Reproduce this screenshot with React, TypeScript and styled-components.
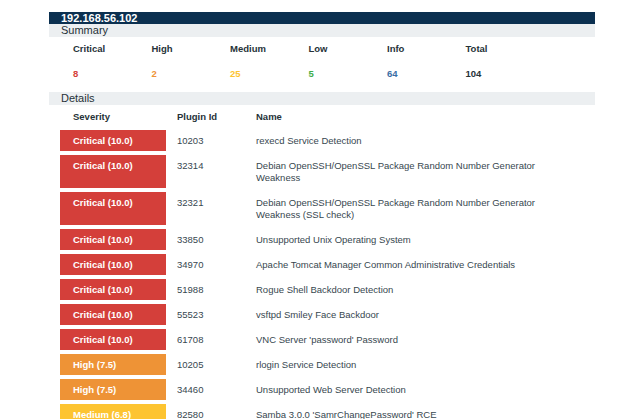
import React from "react";
import styled, { createGlobalStyle } from "styled-components";

const GlobalStyle = createGlobalStyle`
  body { margin: 0; background: #fff; font-family: "Liberation Sans", Arial, sans-serif; }
`;

type Sev = "critical" | "high" | "medium" | "low" | "info" | "total";
const colors: Record<Sev, string> = {
  critical: "#d43f3a",
  high: "#ee9336",
  medium: "#fdc431",
  low: "#3fae49",
  info: "#3a6ea5",
  total: "#263238",
};

const summary: { label: string; value: number; sev: Sev }[] = [
  { label: "Critical", value: 8, sev: "critical" },
  { label: "High", value: 2, sev: "high" },
  { label: "Medium", value: 25, sev: "medium" },
  { label: "Low", value: 5, sev: "low" },
  { label: "Info", value: 64, sev: "info" },
  { label: "Total", value: 104, sev: "total" },
];

const rows: { sev: Sev; label: string; id: string; name: string }[] = [
  { sev: "critical", label: "Critical (10.0)", id: "10203", name: "rexecd Service Detection" },
  { sev: "critical", label: "Critical (10.0)", id: "32314", name: "Debian OpenSSH/OpenSSL Package Random Number Generator Weakness" },
  { sev: "critical", label: "Critical (10.0)", id: "32321", name: "Debian OpenSSH/OpenSSL Package Random Number Generator Weakness (SSL check)" },
  { sev: "critical", label: "Critical (10.0)", id: "33850", name: "Unsupported Unix Operating System" },
  { sev: "critical", label: "Critical (10.0)", id: "34970", name: "Apache Tomcat Manager Common Administrative Credentials" },
  { sev: "critical", label: "Critical (10.0)", id: "51988", name: "Rogue Shell Backdoor Detection" },
  { sev: "critical", label: "Critical (10.0)", id: "55523", name: "vsftpd Smiley Face Backdoor" },
  { sev: "critical", label: "Critical (10.0)", id: "61708", name: "VNC Server 'password' Password" },
  { sev: "high", label: "High (7.5)", id: "10205", name: "rlogin Service Detection" },
  { sev: "high", label: "High (7.5)", id: "34460", name: "Unsupported Web Server Detection" },
  { sev: "medium", label: "Medium (6.8)", id: "82580", name: "Samba 3.0.0 'SamrChangePassword' RCE" },
];

const Page = styled.div`
  width: 546px;
  margin: 12px 0 0 49px;
  font-size: 9.5px;
  color: #263238;
`;

const HostBar = styled.div`
  background: #0b3050;
  color: #fff;
  font-weight: bold;
  font-size: 11px;
  height: 12px;
  line-height: 12px;
  padding-left: 12px;
`;

const SectionBar = styled.div`
  background: #eceff1;
  font-size: 11px;
  height: 13px;
  line-height: 13px;
  padding-left: 12px;
  color: #263238;
`;

const SummaryGrid = styled.div`
  display: grid;
  grid-template-columns: repeat(6, 78.5px);
  grid-template-rows: 12px 12px;
  padding: 6px 0 0 24px;
  row-gap: 13px;
  height: 44px;
  margin-bottom: 5px;
`;

const Label = styled.div`
  font-weight: bold;
`;

const Value = styled.div<{ $sev: Sev }>`
  font-weight: bold;
  color: ${(p) => colors[p.$sev]};
`;

const Table = styled.div`
  padding: 6px 0 0 11px;
`;

const Row = styled.div`
  display: grid;
  grid-template-columns: 106px 68px 320px;
  column-gap: 11px;
  margin-bottom: 4px;
`;

const Head = styled(Row)`
  font-weight: bold;
  height: 14px;
  margin-bottom: 5px;
  & > div:first-child { padding-left: 13px; }
`;

const Badge = styled.div<{ $sev: Sev }>`
  background: ${(p) => colors[p.$sev]};
  color: #fff;
  font-weight: bold;
  padding: 5px 0 0 13px;
  line-height: 12px;
`;

const Cell = styled.div`
  padding: 5px 0 4px;
  line-height: 12px;
  color: #37474f;
`;

export default function App() {
  return (
    <>
      <GlobalStyle />
      <Page>
        <HostBar>192.168.56.102</HostBar>
        <SectionBar>Summary</SectionBar>
        <SummaryGrid>
          {summary.map((s) => (
            <Label key={s.label}>{s.label}</Label>
          ))}
          {summary.map((s) => (
            <Value key={s.label} $sev={s.sev}>
              {s.value}
            </Value>
          ))}
        </SummaryGrid>
        <SectionBar>Details</SectionBar>
        <Table>
          <Head>
            <div>Severity</div>
            <div>Plugin Id</div>
            <div>Name</div>
          </Head>
          {rows.map((r) => (
            <Row key={r.id}>
              <Badge $sev={r.sev}>{r.label}</Badge>
              <Cell>{r.id}</Cell>
              <Cell>{r.name}</Cell>
            </Row>
          ))}
        </Table>
      </Page>
    </>
  );
}
